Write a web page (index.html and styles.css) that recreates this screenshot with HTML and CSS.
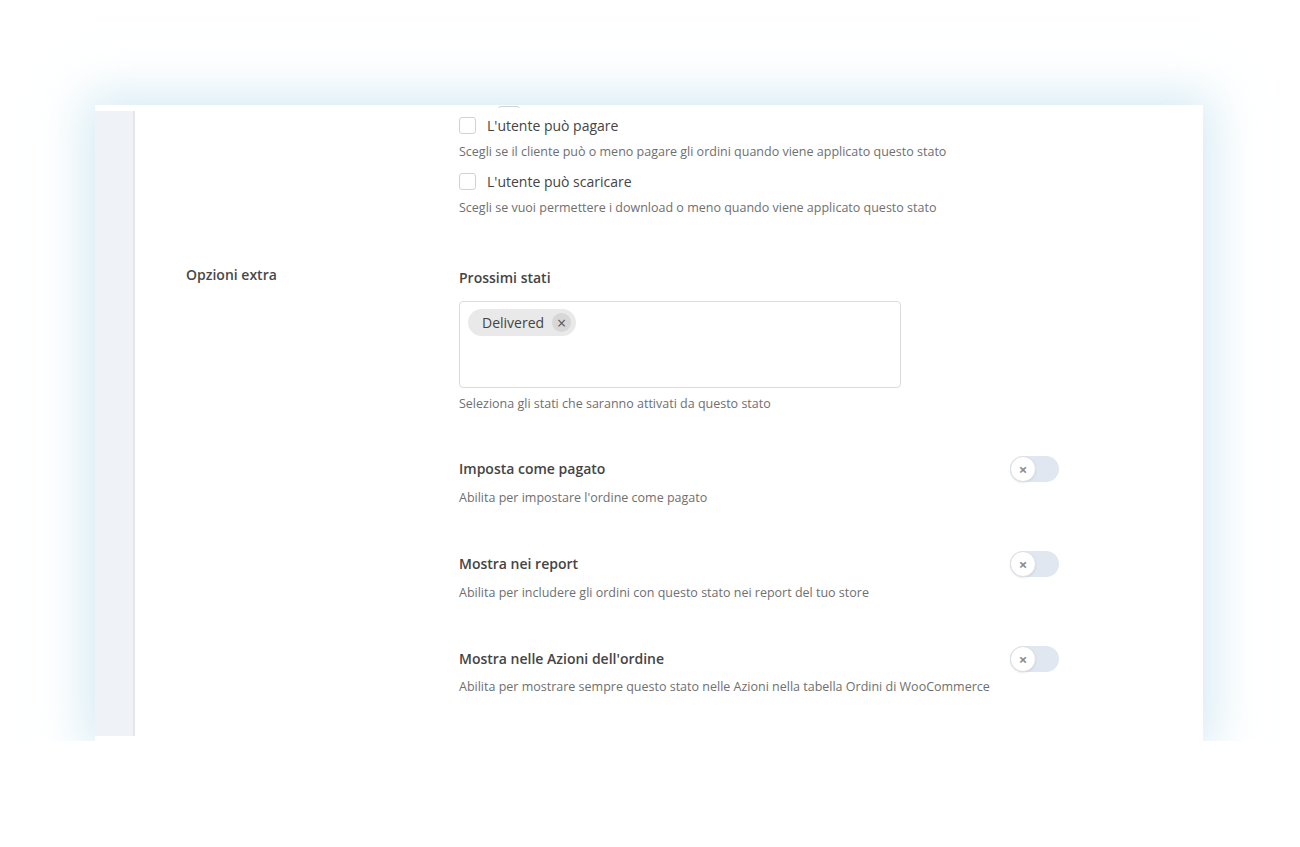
FILE: index.html
```html
<!DOCTYPE html>
<html lang="it">
<head>
    <meta charset="UTF-8">
    <meta name="viewport" content="width=device-width, initial-scale=1.0">
    <title>Impostazioni stato ordine</title>
    <link rel="stylesheet" href="styles.css">
</head>
<body>
    <div class="card">
        <div class="sidebar"></div>

        <div class="main">
            <!-- rows above are scrolled out of view -->
            <div class="clipped">
                <span class="checkbox"></span>
            </div>

            <div class="section">
                <div class="label"></div>
                <div class="field">
                    <label class="check-row first">
                        <span class="checkbox"></span>
                        <span>L'utente può pagare</span>
                    </label>
                    <p class="desc">Scegli se il cliente può o meno pagare gli ordini quando viene applicato questo stato</p>
                    <label class="check-row">
                        <span class="checkbox"></span>
                        <span>L'utente può scaricare</span>
                    </label>
                    <p class="desc">Scegli se vuoi permettere i download o meno quando viene applicato questo stato</p>
                </div>
            </div>

            <div class="section extra">
                <div class="label">Opzioni extra</div>
                <div class="field">
                    <div class="field-title">Prossimi stati</div>
                    <div class="multi-select">
                        <span class="chip">Delivered <span class="chip-x">×</span></span>
                    </div>
                    <p class="desc">Seleziona gli stati che saranno attivati da questo stato</p>

                    <div class="toggle-row">
                        <div class="field-title">Imposta come pagato</div>
                        <span class="toggle"><span class="knob">×</span></span>
                    </div>
                    <p class="desc">Abilita per impostare l'ordine come pagato</p>

                    <div class="toggle-row">
                        <div class="field-title">Mostra nei report</div>
                        <span class="toggle"><span class="knob">×</span></span>
                    </div>
                    <p class="desc">Abilita per includere gli ordini con questo stato nei report del tuo store</p>

                    <div class="toggle-row">
                        <div class="field-title">Mostra nelle Azioni dell'ordine</div>
                        <span class="toggle"><span class="knob">×</span></span>
                    </div>
                    <p class="desc last">Abilita per mostrare sempre questo stato nelle Azioni nella tabella Ordini di WooCommerce</p>
                </div>
            </div>
        </div>
    </div>
</body>
</html>
```

FILE: styles.css
```css
body {
    margin: 0;
    background: #ffffff;
    font-family: 'Open Sans', 'Noto Sans', sans-serif;
    color: #333;
}

.card {
    display: flex;
    width: 1108px;
    margin: 105px 0 0 95px;
    background: #ffffff;
    box-shadow: 0 0 45px 10px rgba(185, 222, 236, 0.6);
}

.sidebar {
    width: 38px;
    margin: 6px 0 5px;
    background: #eff2f6;
    border-right: 2px solid #e4e6ea;
}

.main {
    flex: 1;
    padding: 0 0 45px 51px;
    overflow: hidden;
}

.clipped {
    height: 3px;
    overflow: hidden;
    padding-left: 312px;
}

.clipped .checkbox {
    display: block;
    margin-top: 1px;
    width: 20px;
}

.section {
    display: grid;
    grid-template-columns: 273px 600px;
}

.label {
    font-size: 14px;
    line-height: 20px;
    font-weight: 600;
    color: #484848;
}

.check-row {
    display: flex;
    align-items: center;
    gap: 11px;
    height: 20px;
    margin-top: 10px;
    font-size: 14px;
    color: #444;
}

.check-row.first {
    margin-top: 7px;
}

.checkbox {
    width: 15px;
    height: 15px;
    border: 1px solid #cfd2d6;
    border-radius: 3px;
    background: #fff;
}

.desc {
    margin: 8px 0 0;
    font-size: 12.5px;
    line-height: 18px;
    color: #6f6f6f;
}

.extra {
    margin-top: 48px;
}

.extra .field > .field-title {
    margin-top: 3px;
}

.field-title {
    font-size: 14px;
    line-height: 20px;
    font-weight: 600;
    color: #444;
}

.multi-select {
    width: 425px;
    height: 71px;
    margin-top: 13px;
    padding: 7px 7px 7px 8px;
    border: 1px solid #d8dbe0;
    border-radius: 4px;
}

.chip {
    display: inline-flex;
    align-items: center;
    gap: 8px;
    height: 27px;
    padding: 0 5px 0 14px;
    border-radius: 14px;
    background: #e9e9e9;
    font-size: 14px;
    color: #444;
}

.chip-x {
    display: flex;
    align-items: center;
    justify-content: center;
    width: 19px;
    height: 19px;
    border-radius: 50%;
    background: #d7d7d7;
    font-size: 16px;
    color: #555;
}

.multi-select + .desc {
    margin-top: 7px;
}

.toggle-row {
    display: flex;
    align-items: center;
    justify-content: space-between;
    height: 26px;
    margin-top: 44px;
}

.multi-select + .desc + .toggle-row {
    margin-top: 43px;
}

.toggle-row + .desc {
    margin-top: 7px;
}

.toggle {
    display: flex;
    width: 49px;
    height: 26px;
    border-radius: 13px;
    background: #e1e7f0;
}

.knob {
    display: flex;
    align-items: center;
    justify-content: center;
    width: 24px;
    height: 24px;
    border: 1px solid #dcdfe4;
    border-radius: 50%;
    background: #fff;
    box-shadow: 0 1px 2px rgba(0, 0, 0, 0.08);
    font-size: 15px;
    font-weight: 700;
    color: #8a8d93;
}

.desc.last {
    margin-top: 6px;
}
```
